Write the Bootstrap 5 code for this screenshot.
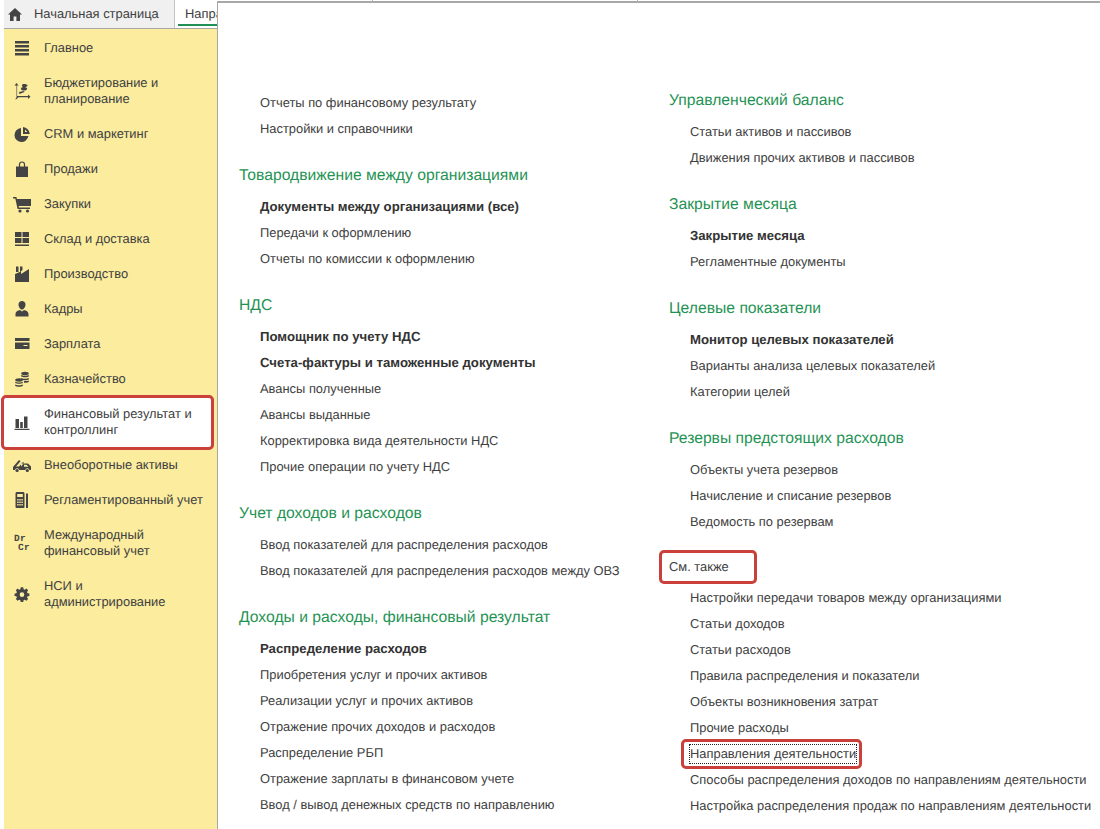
<!DOCTYPE html>
<html lang="ru">
<head>
<meta charset="utf-8">
<title>Направления деятельности</title>
<link href="https://cdn.jsdelivr.net/npm/bootstrap@5.3.0/dist/css/bootstrap.min.css" rel="stylesheet">
<style>
html,body{height:100%;}
body{background:#fff;color:#404040;font-family:"Liberation Sans",Arial,sans-serif;font-size:12.9px;overflow:hidden;text-rendering:geometricPrecision;}
.shell{width:1100px;height:829px;overflow:hidden;}
.leftside{width:217px;padding-left:4px;}
.tabbar{height:29px;background:#f0f0f0;border-bottom:1px solid #a8a8a8;white-space:nowrap;overflow:hidden;}
.home-tab{width:170px;flex:none;padding-left:4px;}
.home-tab span{margin-left:12px;}
.act-tab{background:#fff;border-left:1px solid #c4c4c4;height:28px;padding-left:10px;position:relative;flex-grow:1;}
.act-tab::after{content:"";position:absolute;left:3px;right:0;bottom:2px;height:2px;background:#1f8f58;}
.yellow{background:#fbec9e;padding-top:1px;flex-grow:1;}
.sect{height:35px;padding-left:9px;gap:13px;line-height:16px;}
.sect.two{height:51px;}
.sect svg{flex:none;width:18px;height:18px;fill:#444;overflow:visible;}
.sect.hit{background:#fff;border:3px solid #c9413a;border-radius:5px;height:55px;margin:-1px 3px -3px -3px;padding-left:9px;padding-bottom:2px;}
.sheet{flex-grow:1;margin-top:1px;border-top:2px solid #a8a8a8;border-left:1px solid #a8a8a8;padding-left:21px;background:#fff;height:829px;position:relative;}
.tick{position:absolute;top:-3px;width:1px;height:2px;background:#b0b0b0;}
.tick-a{left:154px;}
.tick-b{left:419px;}
.col-a{width:430px;padding-top:87px;}
.col-b{padding-top:80px;}
.lnk{height:26px;line-height:26px;padding-left:21px;white-space:nowrap;}
.lnk.strong{font-weight:700;font-size:13.2px;color:#333;}
.grp{height:36px;line-height:36px;margin-top:16px;font-size:15.7px;color:#1f9354;white-space:nowrap;}
.grp.first{margin-top:0;}
.also{height:33px;line-height:30px;margin-top:17px;position:relative;}
.mark-a,.mark-b{position:absolute;border:3px solid #c9413a;border-radius:5px;pointer-events:none;}
.mark-a{left:-10px;top:-2px;width:98px;height:34px;}
.mark-b{left:12px;top:-2px;width:181px;height:30px;}
.focus-txt{outline:1px dotted #222;line-height:18px;display:inline-block;}
.rel{position:relative;}
.drcr{font-family:"Liberation Mono",monospace;font-weight:700;font-size:9.5px;letter-spacing:.3px;}
</style>
</head>
<body>
<div class="shell d-flex">
  <div class="leftside d-flex flex-column">
    <div class="tabbar d-flex">
      <div class="home-tab d-flex align-items-center">
        <svg width="14" height="13" viewBox="0 0 14 13" fill="#444"><path d="M7 0 0 6.500h2V13h3.600V8.600h2.800V13H12V6.500h2z"/></svg>
        <span>Начальная страница</span>
      </div>
      <div class="act-tab d-flex align-items-center overflow-hidden">Направления деятельности</div>
    </div>
    <div class="yellow">
      <div class="sect d-flex align-items-center"><svg viewBox="0 0 18 18"><path d="M2 2h14v2.400H2zM2 6h14v2.400H2zM2 10h14v2.400H2zM2 14h14v2.400H2z"/></svg><span>Главное</span></div>
      <div class="sect two d-flex align-items-center"><svg viewBox="0 0 18 18"><path d="M3.500 1 5.500 3.500H4.100V14H15V12.500L17.500 14.700 15 17V15.300H5.500L3 17.500 2.400 16.900 3.500 15.500V3.500H1.500z"/><path d="M8 6.500c0-1 1.700-1.500 3-1.500s3 .5 3 1.500v.5c0 1-1.700 1.500-3 1.500S8 8 8 7zM11 2c1.500 0 3.500.5 3.500 1.500S12.500 5 11 5 9 4.500 9 3.500 9.500 2 11 2zM6 10l5-1 .5 1-5 2z"/></svg><span>Бюджетирование и<br>планирование</span></div>
      <div class="sect d-flex align-items-center"><svg viewBox="0 0 18 18"><path d="M8 3a7 7 0 1 0 7.400 8H8z"/><path d="M10 2v7h6.800A7.500 7.500 0 0 0 10 2zm2 2.600 2.400 2.400H12z" fill-rule="evenodd"/></svg><span>CRM и маркетинг</span></div>
      <div class="sect d-flex align-items-center"><svg viewBox="0 0 18 18"><path d="M3 6.500h2.900V4.500a3.100 3.100 0 0 1 6.200 0v2h2.900V17H3zM7.100 6.500h3.800v-2a1.900 1.900 0 0 0-3.800 0z" fill-rule="evenodd"/></svg><span>Продажи</span></div>
      <div class="sect d-flex align-items-center"><svg viewBox="0 0 18 18"><path d="M0 2h3.400l.5 2H18v7H5.600L6 12.500h11V14H4.600L2.300 3.500H0z"/><circle cx="7" cy="16" r="1.600"/><circle cx="14.500" cy="16" r="1.600"/></svg><span>Закупки</span></div>
      <div class="sect d-flex align-items-center"><svg viewBox="0 0 18 18"><path d="M2 2h6.500v5H2zM9.500 2H16v5H9.500zM2 8h6.500v5H2zM9.500 8H16v5H9.500zM2 14.500h14V16H2z"/></svg><span>Склад и доставка</span></div>
      <div class="sect d-flex align-items-center"><svg viewBox="0 0 18 18"><path d="M3 1.500h2.500V7H3zM7 1.500h2.500V5L7 7zM2 9l6-2.500V9l8-5V17H2z"/></svg><span>Производство</span></div>
      <div class="sect d-flex align-items-center"><svg viewBox="0 0 18 18"><path d="M9 1c2 0 3.500 1.300 3.500 3.500S11 9.500 9 9.500 5.500 6.700 5.500 4.500 7 1 9 1zM2.500 14c0-2.500 2.500-3.500 4.500-4l2 1.500L11 10c2 .5 4.500 1.500 4.500 4v2.500h-13z"/></svg><span>Кадры</span></div>
      <div class="sect d-flex align-items-center"><svg viewBox="0 0 18 18"><path d="M2 3h14.500v3H2zM2 7.500h14.500V14H2zM10.500 10v1h4v-1z" fill-rule="evenodd"/></svg><span>Зарплата</span></div>
      <div class="sect d-flex align-items-center"><svg viewBox="0 0 18 18"><ellipse cx="12" cy="3.500" rx="3.800" ry="1.700"/><path d="M8.200 5c1.500 1 6 1 7.600 0v1.500c-1.500 1-6 1-7.600 0zM8.200 8c1.500 1 6 1 7.600 0v1.500c-1.500 1-6 1-7.600 0zM11 11c2 .3 3.800 0 4.800-.6V12c-.8.600-2.700 1-4.800.8z"/><ellipse cx="6" cy="10" rx="3.800" ry="1.700"/><path d="M2.200 11.800c1.500 1 6 1 7.600 0v1.300c-1.500 1-6 1-7.600 0zM2.200 14.500c1.500 1 6 1 7.600 0V16c-1.500 1-6 1-7.600 0z"/></svg><span>Казначейство</span></div>
      <div class="sect two hit d-flex align-items-center"><svg viewBox="0 0 18 18"><path d="M2.500 6h3.500v9H2.500zM7.200 9h2.600v6H7.200zM11 3.500h3.500V15H11zM1.500 15.700h15V17h-15z"/></svg><span>Финансовый результат и<br>контроллинг</span></div>
      <div class="sect d-flex align-items-center"><svg viewBox="0 0 18 18"><path d="M0 11l6-7 1.500 1.300L3 10.500h3L10 6l1 1-3 3.500V7.500h7l3 3V14h-1.500a2.200 2.200 0 0 0-4.300 0H6.300a2.200 2.200 0 0 0-4.300 0H0zM11 8.800v2h4.500l-2-2z" fill-rule="evenodd"/><circle cx="4.100" cy="14.500" r="1.600"/><circle cx="14.300" cy="14.500" r="1.600"/></svg><span>Внеоборотные активы</span></div>
      <div class="sect d-flex align-items-center"><svg viewBox="0 0 18 18"><path d="M2.500 2.500c0-.8.700-1.500 1.500-1.500h6c.8 0 1.500.7 1.500 1.500V16a1 1 0 0 1-1 1H3.500a1 1 0 0 1-1-1zM4.200 3v3h5.600V3zM4.200 8v1.500h1.400V8zm2.100 0v1.500h1.400V8zm2.100 0v1.500h1.400V8zM4.200 10.500V12h1.400v-1.500zm2.100 0V12h1.400v-1.500zm2.100 0V12h1.400v-1.500zM4.200 13v1.500h1.400V13zm2.100 0v1.500h1.400V13zm2.100 0v1.500h1.400V13zM13 2.500h2V17h-2z" fill-rule="evenodd"/></svg><span>Регламентированный учет</span></div>
      <div class="sect two d-flex align-items-center"><svg viewBox="0 0 18 18"><text class="drcr" x="1" y="6.800">Dr</text><text class="drcr" x="5" y="16">Cr</text></svg><span>Международный<br>финансовый учет</span></div>
      <div class="sect two d-flex align-items-center"><svg viewBox="0 0 18 18"><path d="M7.500 1h3l.4 2.200 1.500.6 1.900-1.300 2.100 2.100-1.300 1.900.6 1.500 2.200.4v3l-2.200.4-.6 1.500 1.300 1.900-2.100 2.100-1.900-1.300-1.500.6-.4 2.200h-3l-.4-2.200-1.500-.6-1.900 1.300-2.100-2.100 1.300-1.900-.6-1.500L.1 11.400v-3l2.200-.4.6-1.500L1.600 4.600l2.100-2.100 1.900 1.300 1.500-.6zM9 7a2.800 2.800 0 1 0 0 5.600A2.800 2.800 0 0 0 9 7z" transform="translate(1.500 1.500) scale(.83)" fill-rule="evenodd"/></svg><span>НСИ и<br>администрирование</span></div>
    </div>
  </div>
  <div class="sheet d-flex">
    <span class="tick tick-a"></span><span class="tick tick-b"></span>
    <div class="col-a">
      <div class="lnk">Отчеты по финансовому результату</div>
      <div class="lnk">Настройки и справочники</div>
      <div class="grp">Товародвижение между организациями</div>
      <div class="lnk strong">Документы между организациями (все)</div>
      <div class="lnk">Передачи к оформлению</div>
      <div class="lnk">Отчеты по комиссии к оформлению</div>
      <div class="grp">НДС</div>
      <div class="lnk strong">Помощник по учету НДС</div>
      <div class="lnk strong">Счета-фактуры и таможенные документы</div>
      <div class="lnk">Авансы полученные</div>
      <div class="lnk">Авансы выданные</div>
      <div class="lnk">Корректировка вида деятельности НДС</div>
      <div class="lnk">Прочие операции по учету НДС</div>
      <div class="grp">Учет доходов и расходов</div>
      <div class="lnk">Ввод показателей для распределения расходов</div>
      <div class="lnk">Ввод показателей для распределения расходов между ОВЗ</div>
      <div class="grp">Доходы и расходы, финансовый результат</div>
      <div class="lnk strong">Распределение расходов</div>
      <div class="lnk">Приобретения услуг и прочих активов</div>
      <div class="lnk">Реализации услуг и прочих активов</div>
      <div class="lnk">Отражение прочих доходов и расходов</div>
      <div class="lnk">Распределение РБП</div>
      <div class="lnk">Отражение зарплаты в финансовом учете</div>
      <div class="lnk">Ввод / вывод денежных средств по направлению</div>
    </div>
    <div class="col-b">
      <div class="grp first">Управленческий баланс</div>
      <div class="lnk">Статьи активов и пассивов</div>
      <div class="lnk">Движения прочих активов и пассивов</div>
      <div class="grp">Закрытие месяца</div>
      <div class="lnk strong">Закрытие месяца</div>
      <div class="lnk">Регламентные документы</div>
      <div class="grp">Целевые показатели</div>
      <div class="lnk strong">Монитор целевых показателей</div>
      <div class="lnk">Варианты анализа целевых показателей</div>
      <div class="lnk">Категории целей</div>
      <div class="grp">Резервы предстоящих расходов</div>
      <div class="lnk">Объекты учета резервов</div>
      <div class="lnk">Начисление и списание резервов</div>
      <div class="lnk">Ведомость по резервам</div>
      <div class="also">См. также<span class="mark-a"></span></div>
      <div class="lnk">Настройки передачи товаров между организациями</div>
      <div class="lnk">Статьи доходов</div>
      <div class="lnk">Статьи расходов</div>
      <div class="lnk">Правила распределения и показатели</div>
      <div class="lnk">Объекты возникновения затрат</div>
      <div class="lnk">Прочие расходы</div>
      <div class="lnk rel"><span class="focus-txt">Направления деятельности</span><span class="mark-b"></span></div>
      <div class="lnk">Способы распределения доходов по направлениям деятельности</div>
      <div class="lnk">Настройка распределения продаж по направлениям деятельности</div>
    </div>
  </div>
</div>
<script src="https://cdn.jsdelivr.net/npm/bootstrap@5.3.0/dist/js/bootstrap.bundle.min.js"></script>
</body>
</html>
